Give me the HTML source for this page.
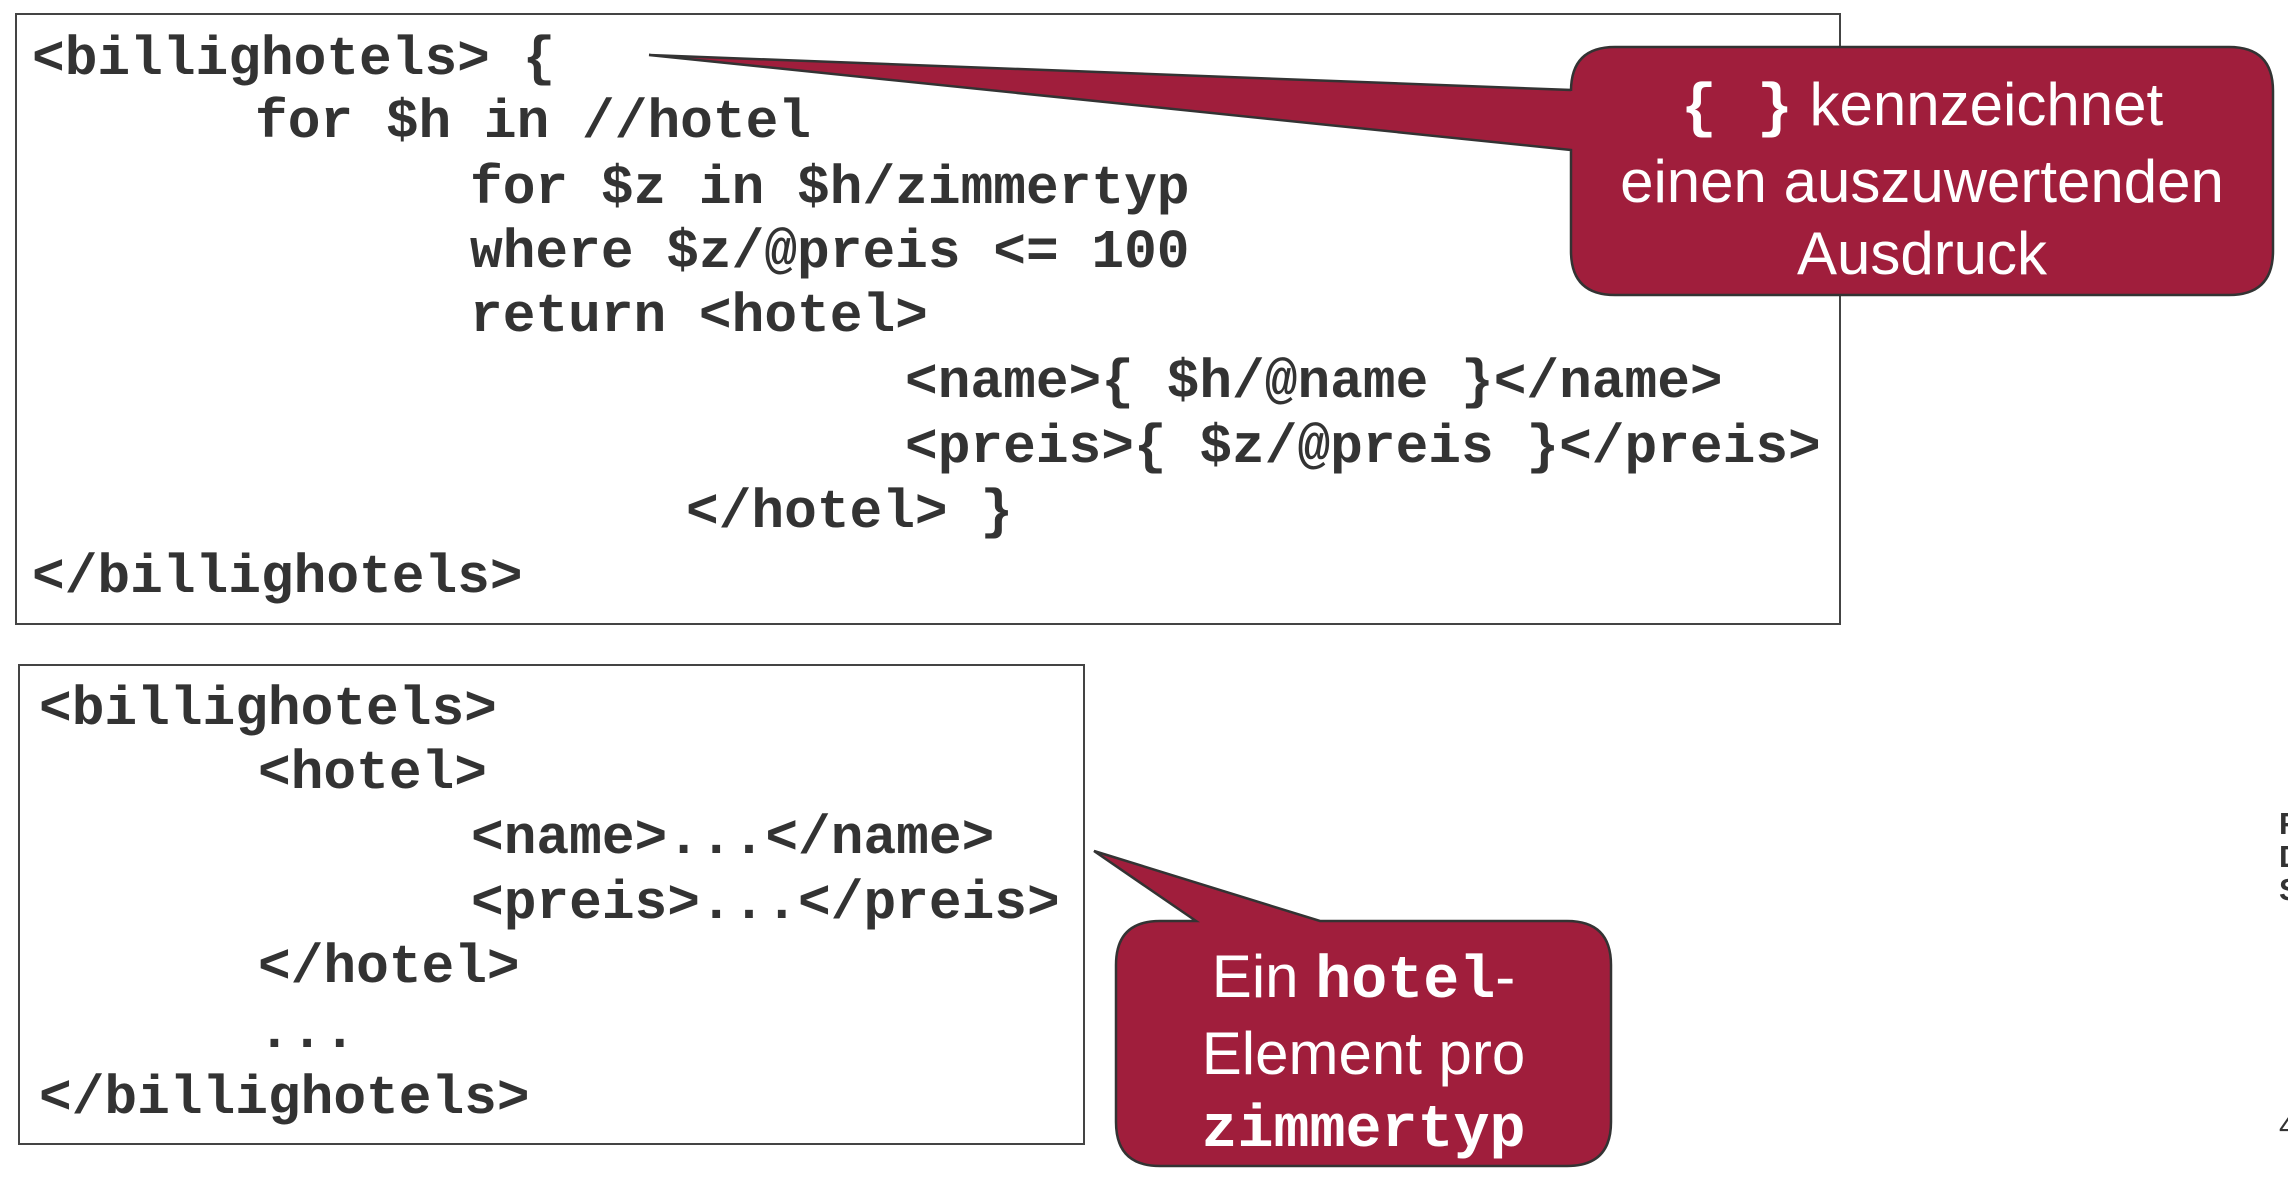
<!DOCTYPE html>
<html><head><meta charset="utf-8"><style>
html,body{margin:0;padding:0;background:#fff;}
body{width:2288px;height:1184px;position:relative;overflow:hidden;}
.box{position:absolute;border:2px solid #444;box-sizing:border-box;}
.c{position:absolute;font-family:"Liberation Mono",monospace;font-weight:bold;font-size:54.5px;line-height:64px;height:64px;color:#333;white-space:pre;}
.t{position:absolute;font-family:"Liberation Sans",sans-serif;font-size:60px;color:#fff;text-align:center;white-space:pre;line-height:72px;}
.m{font-family:"Liberation Mono",monospace;font-weight:bold;}
.r{position:absolute;font-family:"Liberation Sans",sans-serif;font-weight:bold;font-size:31px;color:#333;left:2279px;line-height:36px;}
</style></head><body>
<div class="box" style="left:15px;top:13px;width:1826px;height:612px;"></div>
<div class="box" style="left:18px;top:664px;width:1067px;height:481px;"></div>

<div class="c" style="left:32px;top:29px">&lt;billighotels&gt; {</div>
<div class="c" style="left:255px;top:92px">for $h in //hotel</div>
<div class="c" style="left:470px;top:158px">for $z in $h/zimmertyp</div>
<div class="c" style="left:470px;top:222px">where $z/@preis &lt;= 100</div>
<div class="c" style="left:470px;top:286px">return &lt;hotel&gt;</div>
<div class="c" style="left:905px;top:352px">&lt;name&gt;{ $h/@name }&lt;/name&gt;</div>
<div class="c" style="left:905px;top:417px">&lt;preis&gt;{ $z/@preis }&lt;/preis&gt;</div>
<div class="c" style="left:686px;top:482px">&lt;/hotel&gt; }</div>
<div class="c" style="left:32px;top:547px">&lt;/billighotels&gt;</div>

<div class="c" style="left:39px;top:679px">&lt;billighotels&gt;</div>
<div class="c" style="left:258px;top:743px">&lt;hotel&gt;</div>
<div class="c" style="left:471px;top:808px">&lt;name&gt;...&lt;/name&gt;</div>
<div class="c" style="left:471px;top:873px">&lt;preis&gt;...&lt;/preis&gt;</div>
<div class="c" style="left:258px;top:937px">&lt;/hotel&gt;</div>
<div class="c" style="left:258px;top:1002px">...</div>
<div class="c" style="left:39px;top:1068px">&lt;/billighotels&gt;</div>

<svg width="2288" height="1184" style="position:absolute;left:0;top:0">
<path d="M1615,47 H2229 Q2273,47 2273,91 V251 Q2273,295 2229,295 H1615 Q1571,295 1571,251 V150 L649,55 L1571,90 V91 Q1571,47 1615,47 Z" fill="#a01e3c" stroke="#333" stroke-width="2.5"/>
<path d="M1160,921 H1196 L1094,851 L1320,921 H1567 Q1611,921 1611,965 V1122 Q1611,1166 1567,1166 H1160 Q1116,1166 1116,1122 V965 Q1116,921 1160,921 Z" fill="#a01e3c" stroke="#333" stroke-width="2.5"/>
</svg>

<div class="t" style="left:1571px;width:702px;top:69px;"><span class="m">{</span><span style="display:inline-block;width:40px"></span><span class="m">}</span> kennzeichnet
einen auszuwertenden
Ausdruck</div>
<div class="t" style="left:1116px;width:495px;top:941px;">Ein <span class="m">hotel</span>-
Element pro
<span class="m">zimmertyp</span></div>

<div class="r" style="top:806px">F</div>
<div class="r" style="top:839px">D</div>
<div class="r" style="top:872px">S</div>
<div class="r" style="top:1108px;font-weight:normal">4</div>
</body></html>
